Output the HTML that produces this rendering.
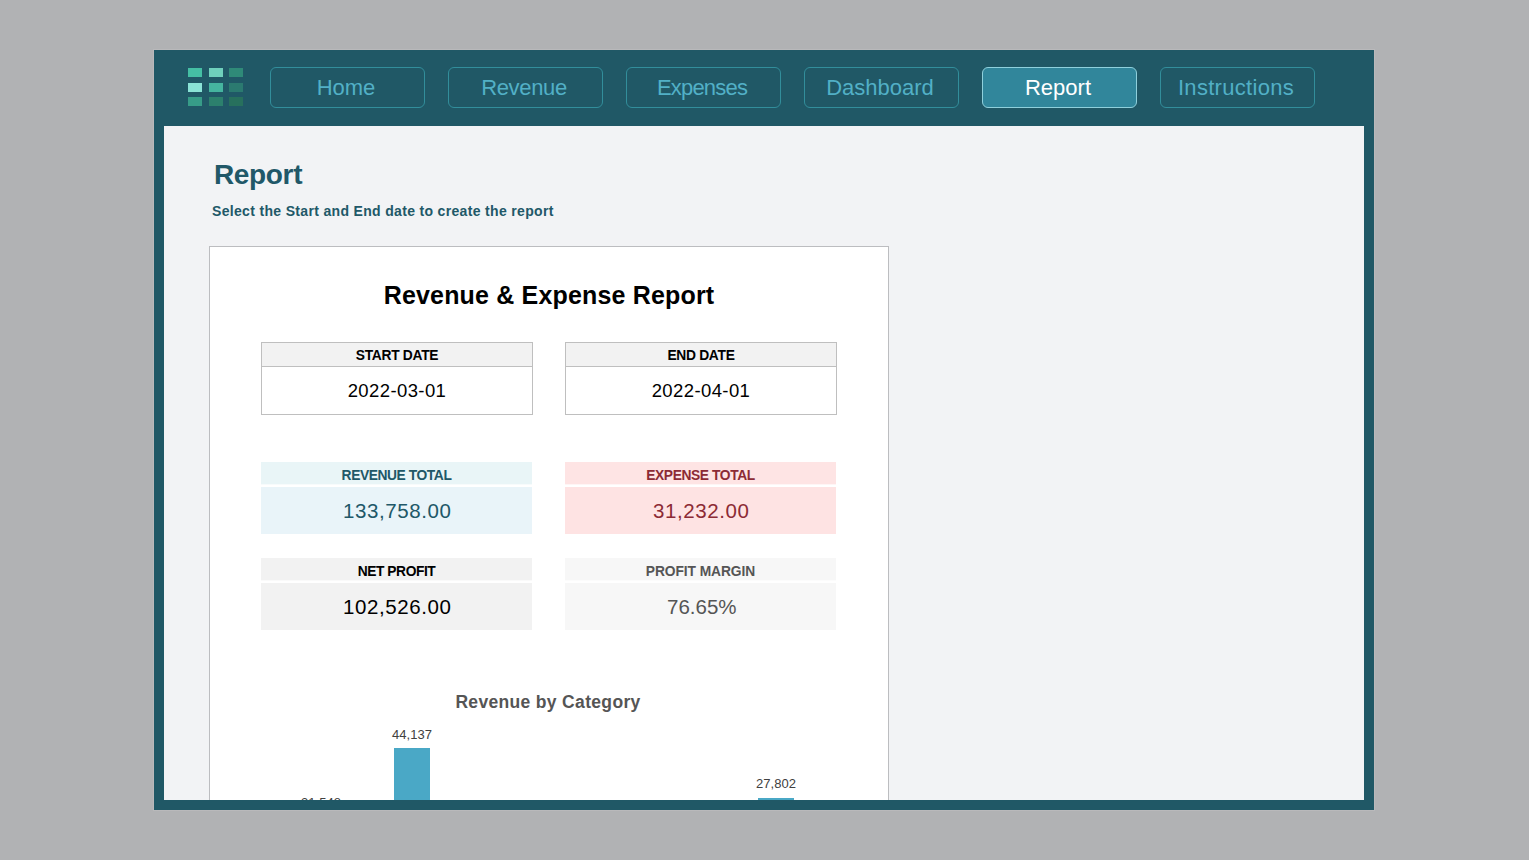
<!DOCTYPE html>
<html lang="en">
<head>
<meta charset="utf-8">
<title>Report</title>
<style>
*{box-sizing:border-box;margin:0;padding:0}
html,body{width:1529px;height:860px;overflow:hidden;background:#b1b2b4;font-family:"Liberation Sans",sans-serif}
.frame{position:absolute;left:154px;top:50px;width:1220px;height:760px;background:#205866;box-shadow:0 0 0 1px rgba(255,255,255,.1)}
.logo{position:absolute;left:0;top:0}
.logo i{position:absolute;display:block;width:14px;height:9px}
.nav a{position:absolute;top:17px;width:155px;height:41px;border:1px solid #328e9b;border-radius:6px;color:#52b0c6;font-size:22px;line-height:40px;padding-right:3px;text-align:center;text-decoration:none}
.nav a.on{background:#31869b;border-color:#8fd0dc;color:#fff}
.content{position:absolute;left:10px;top:76px;width:1200px;height:674px;background:#f2f3f5;overflow:hidden}
h1{position:absolute;left:50px;top:33px;font-size:28px;letter-spacing:-.35px;line-height:32px;font-weight:bold;color:#215868;white-space:nowrap}
.sub{position:absolute;left:48px;top:76px;font-size:14px;letter-spacing:.33px;line-height:18px;font-weight:bold;color:#215868;white-space:nowrap}
.card{position:absolute;left:45px;top:120px;width:680px;height:700px;background:#fff;border:1px solid #bcbdc0}
.card h2{position:absolute;left:0;width:678px;top:31px;text-align:center;font-size:25px;letter-spacing:.17px;line-height:34px;font-weight:bold;color:#000;white-space:nowrap}
.date{position:absolute;top:95px;width:272px;height:73px;border:1px solid #bfbfbf;background:#fff}
.date b{display:block;height:24px;background:#f2f2f2;border-bottom:1px solid #bfbfbf;font-size:13.8px;letter-spacing:-.3px;line-height:25px;text-align:center;color:#000}
.date span{display:block;height:47px;line-height:47px;font-size:18.5px;letter-spacing:.4px;text-align:center;color:#000}
.m{position:absolute;width:271px;height:72px}
.m b{display:block;height:23px;border-bottom:1px solid #fff;font-size:13.8px;letter-spacing:-.28px;line-height:28px;text-align:center}
.m span{display:block;margin-top:2px;padding-left:1.5px;height:47px;line-height:48px;font-size:20.5px;letter-spacing:.6px;text-align:center}
.chart-t{position:absolute;left:-1px;width:678px;top:443px;text-align:center;font-size:17.5px;letter-spacing:.33px;line-height:24px;font-weight:bold;color:#555}
.bar{position:absolute;width:36px;background:#4aa8c6}
.lbl{position:absolute;width:80px;text-align:center;font-size:13px;line-height:16px;color:#404040}
</style>
</head>
<body>
<div class="frame">
  <div class="logo">
    <i style="left:34px;top:18px;background:#45bfa4"></i><i style="left:54.5px;top:18px;background:#6fd0bc"></i><i style="left:75px;top:18px;background:#2f8a78"></i>
    <i style="left:34px;top:32.5px;background:#8ae3d6"></i><i style="left:54.5px;top:32.5px;background:#45b49f"></i><i style="left:75px;top:32.5px;background:#2b7a70"></i>
    <i style="left:34px;top:47px;background:#379c88"></i><i style="left:54.5px;top:47px;background:#2c806d"></i><i style="left:75px;top:47px;background:#27705d"></i>
  </div>
  <div class="nav">
    <a style="left:116px;letter-spacing:0">Home</a>
    <a style="left:294px;letter-spacing:-.35px">Revenue</a>
    <a style="left:472px;letter-spacing:-.8px">Expenses</a>
    <a style="left:650px;letter-spacing:0">Dashboard</a>
    <a class="on" style="left:828px;letter-spacing:0">Report</a>
    <a style="left:1006px;letter-spacing:.3px">Instructions</a>
  </div>
  <div class="content">
    <h1>Report</h1>
    <div class="sub">Select the Start and End date to create the report</div>
    <div class="card">
      <h2>Revenue &amp; Expense Report</h2>
      <div class="date" style="left:51px"><b>START DATE</b><span>2022-03-01</span></div>
      <div class="date" style="left:355px"><b>END DATE</b><span>2022-04-01</span></div>

      <div class="m" style="left:51px;top:215px;color:#215868"><b style="background:#e9f5f7;border-color:#f7fbfc;letter-spacing:-.42px">REVENUE TOTAL</b><span style="background:#e9f4f9">133,758.00</span></div>
      <div class="m" style="left:355px;top:215px;color:#8c2b35"><b style="background:#fee4e4;border-color:#fff5f5;letter-spacing:-.4px">EXPENSE TOTAL</b><span style="background:#fee3e3">31,232.00</span></div>
      <div class="m" style="left:51px;top:311px;color:#000"><b style="background:#f2f2f2;border-color:#fafafa;letter-spacing:-.45px">NET PROFIT</b><span style="background:#f2f2f2">102,526.00</span></div>
      <div class="m" style="left:355px;top:311px;color:#555"><b style="background:#f7f7f7;border-color:#fcfcfc;letter-spacing:-.08px">PROFIT MARGIN</b><span style="background:#f7f7f7;letter-spacing:0;padding-left:2.5px">76.65%</span></div>

      <div class="chart-t">Revenue by Category</div>
      <div class="lbl" style="left:162px;top:480px">44,137</div>
      <div class="bar" style="left:184px;top:501px;height:200px"></div>
      <div class="lbl" style="left:526px;top:529px">27,802</div>
      <div class="bar" style="left:548px;top:551px;height:150px"></div>
      <div class="lbl" style="left:71px;top:548px">31,548</div>
    </div>
  </div>
</div>
</body>
</html>
